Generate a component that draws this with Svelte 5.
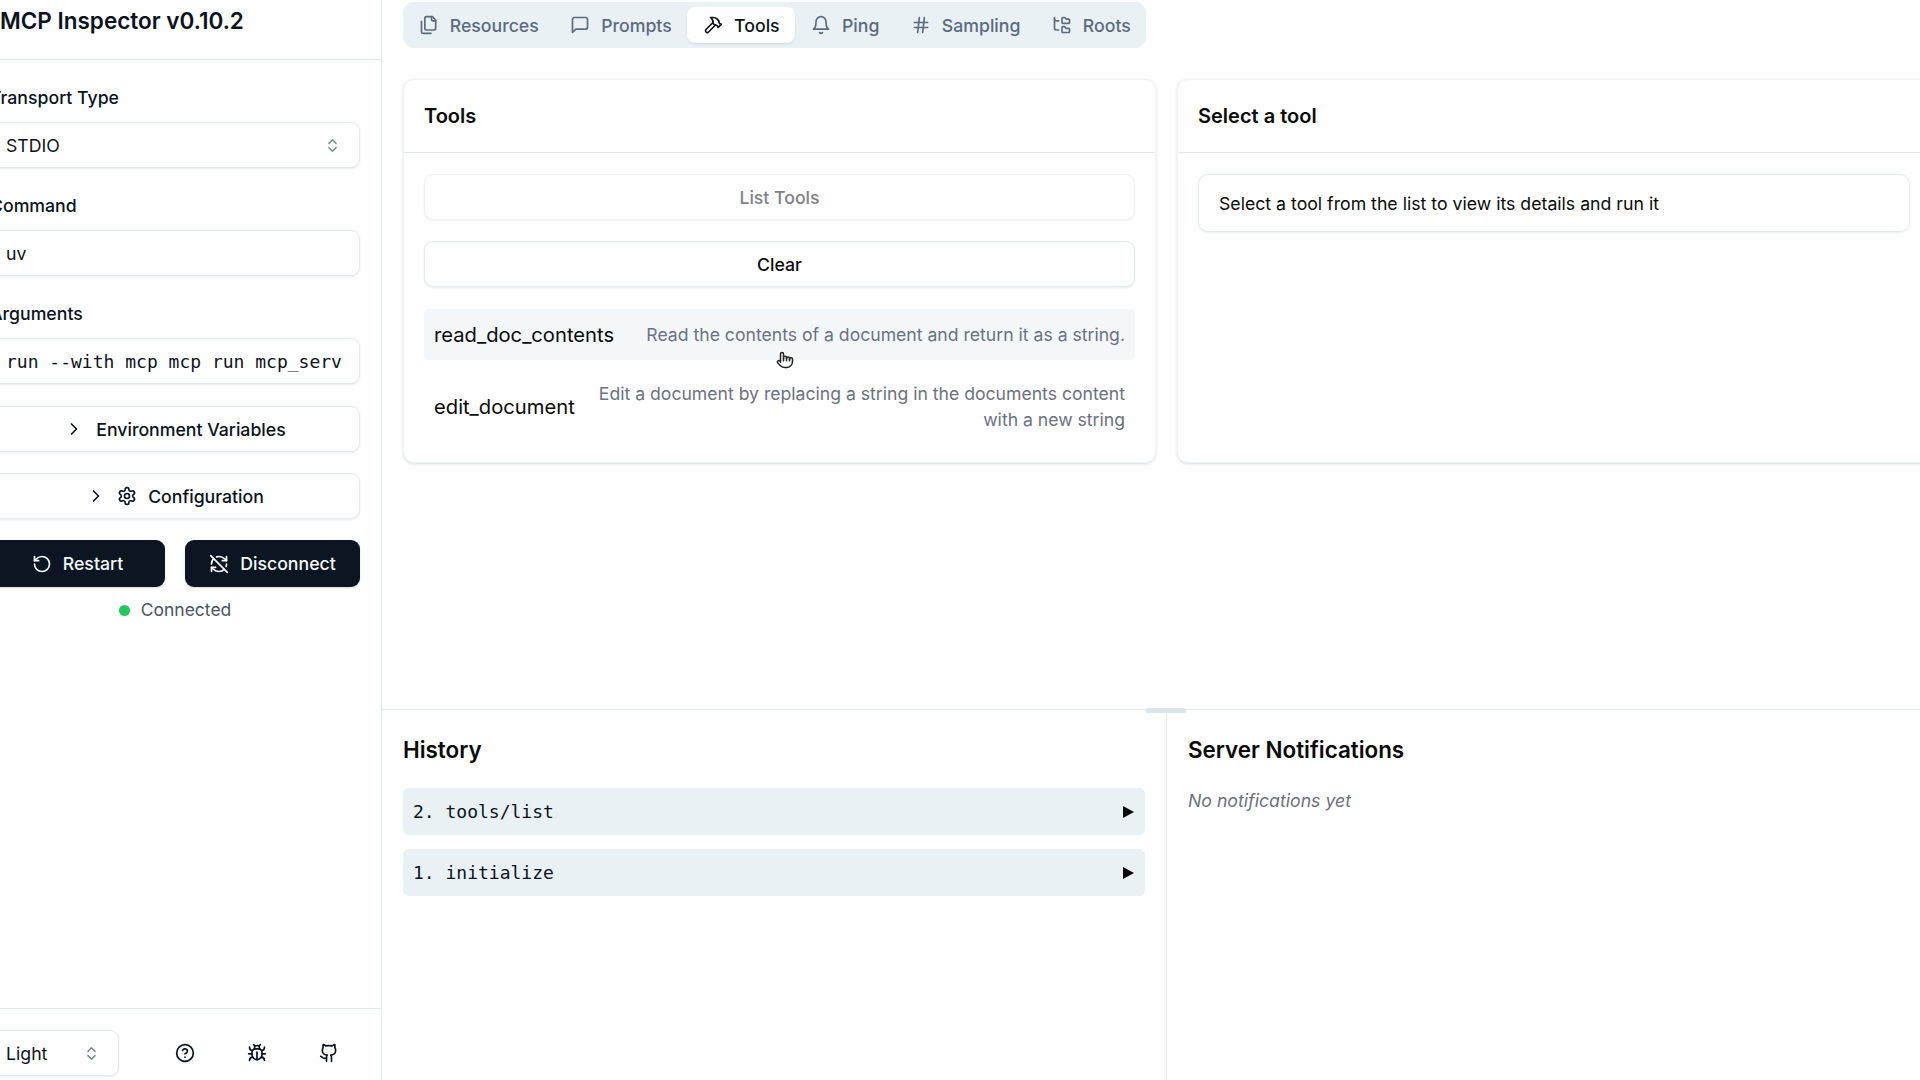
<script lang="ts">
    const icons: Record<string, string[]> = {
        files: [
            "M20 7h-3a2 2 0 0 1-2-2V2",
            "M9 18a2 2 0 0 1-2-2V4a2 2 0 0 1 2-2h7l4 4v10a2 2 0 0 1-2 2Z",
            "M3 7.6v12.8A1.6 1.6 0 0 0 4.6 22h9.8",
        ],
        message: ["M21 15a2 2 0 0 1-2 2H7l-4 4V5a2 2 0 0 1 2-2h14a2 2 0 0 1 2 2z"],
        hammer: [
            "m15 12-8.373 8.373a1 1 0 1 1-3-3L12 9",
            "m18 15 4-4",
            "m21.5 11.5-1.914-1.914A2 2 0 0 1 19 8.172V7l-2.26-2.26a6 6 0 0 0-4.202-1.756L9 2.96l.92.82A6.18 6.18 0 0 1 12 8.4V10l2 2h1.172a2 2 0 0 1 1.414.586L18.5 14.5",
        ],
        bell: [
            "M6 8a6 6 0 0 1 12 0c0 7 3 9 3 9H3s3-2 3-9",
            "M10.3 21a1.94 1.94 0 0 0 3.4 0",
        ],
        hash: ["M4 9h16", "M4 15h16", "M10 3 8 21", "M16 3l-2 18"],
        roots: [
            "M20 10a1 1 0 0 0 1-1V6a1 1 0 0 0-1-1h-2.5a1 1 0 0 1-.8-.4l-.9-1.2A1 1 0 0 0 15 3h-2a1 1 0 0 0-1 1v5a1 1 0 0 0 1 1Z",
            "M20 21a1 1 0 0 0 1-1v-3a1 1 0 0 0-1-1h-2.9a1 1 0 0 1-.88-.55l-.42-.85a1 1 0 0 0-.92-.6H13a1 1 0 0 0-1 1v5a1 1 0 0 0 1 1Z",
            "M3 5a2 2 0 0 0 2 2h3",
            "M3 3v13a2 2 0 0 0 2 2h3",
        ],
        updown: ["m7 15 5 5 5-5", "m7 9 5-5 5 5"],
        right: ["m9 18 6-6-6-6"],
        gear: [
            "M12.22 2h-.44a2 2 0 0 0-2 2v.18a2 2 0 0 1-1 1.73l-.43.25a2 2 0 0 1-2 0l-.15-.08a2 2 0 0 0-2.73.73l-.22.38a2 2 0 0 0 .73 2.73l.15.1a2 2 0 0 1 1 1.72v.51a2 2 0 0 1-1 1.74l-.15.09a2 2 0 0 0-.73 2.73l.22.38a2 2 0 0 0 2.73.73l.15-.08a2 2 0 0 1 2 0l.43.25a2 2 0 0 1 1 1.73V20a2 2 0 0 0 2 2h.44a2 2 0 0 0 2-2v-.18a2 2 0 0 1 1-1.73l.43-.25a2 2 0 0 1 2 0l.15.08a2 2 0 0 0 2.73-.73l.22-.39a2 2 0 0 0-.73-2.73l-.15-.08a2 2 0 0 1-1-1.74v-.5a2 2 0 0 1 1-1.74l.15-.09a2 2 0 0 0 .73-2.73l-.22-.38a2 2 0 0 0-2.73-.73l-.15.08a2 2 0 0 1-2 0l-.43-.25a2 2 0 0 1-1-1.73V4a2 2 0 0 0-2-2z",
            "M12 9a3 3 0 1 0 0 6 3 3 0 0 0 0-6z",
        ],
        restart: ["M3 12a9 9 0 1 0 9-9 9.75 9.75 0 0 0-6.74 2.74L3 8", "M3 3v5h5"],
        disconnect: [
            "M21 8L18.74 5.74A9.75 9.75 0 0 0 12 3C11 3 10.03 3.16 9.13 3.47",
            "M8 16H3v5",
            "M3 12C3 9.51 4 7.26 5.64 5.64",
            "m3 16 2.26 2.26A9.75 9.75 0 0 0 12 21c2.49 0 4.74-1 6.36-2.64",
            "M21 12c0 1-.16 1.97-.47 2.87",
            "M21 3v5h-5",
            "M22 22 2 2",
        ],
        help: [
            "M12 2a10 10 0 1 0 0 20 10 10 0 0 0 0-20z",
            "M9.09 9a3 3 0 0 1 5.83 1c0 2-3 3-3 3",
            "M12 17h.01",
        ],
        bug: [
            "m8 2 1.88 1.88",
            "M14.12 3.88 16 2",
            "M9 7.13v-1a3.003 3.003 0 1 1 6 0v1",
            "M12 20c-3.3 0-6-2.7-6-6v-3a4 4 0 0 1 4-4h4a4 4 0 0 1 4 4v3c0 3.3-2.7 6-6 6",
            "M12 20v-9",
            "M6.53 9C4.6 8.8 3 7.1 3 5",
            "M6 13H2",
            "M3 21c0-2.1 1.7-3.9 3.8-4",
            "M20.97 5c0 2.1-1.6 3.8-3.5 4",
            "M22 13h-4",
            "M17.2 17c2.1.1 3.8 1.9 3.8 4",
        ],
        github: [
            "M15 22v-4a4.8 4.8 0 0 0-1-3.5c3 0 6-2 6-5.5.08-1.25-.27-2.48-1-3.5.28-1.15.28-2.35 0-3.5 0 0-1 0-3 1.5-2.64-.5-5.36-.5-8 0C6 2 5 2 5 2c-.3 1.15-.3 2.35 0 3.5A5.403 5.403 0 0 0 4 9c0 3.5 3 5.5 6 5.5-.39.49-.68 1.05-.85 1.65-.17.6-.22 1.23-.15 1.85v4",
            "M9 18c-4.51 2-5-2-7-2",
        ],
        pointer: [
            "M18 11a2 2 0 1 1 4 0v3a8 8 0 0 1-8 8h-2c-2.8 0-4.5-.86-5.99-2.34l-3.6-3.6a2 2 0 0 1 2.83-2.82L6 15V4a2 2 0 0 1 4 0v5a2 2 0 0 1 4 0v1a2 2 0 0 1 4 0z",
            "M10 9.5V13",
            "M14 10v3",
            "M18 11v2",
        ],
    };

    const tabs = [
        { label: "Resources", icon: "files" },
        { label: "Prompts", icon: "message" },
        { label: "Tools", icon: "hammer", active: true },
        { label: "Ping", icon: "bell" },
        { label: "Sampling", icon: "hash" },
        { label: "Roots", icon: "roots" },
    ];

    const history = ["2. tools/list", "1. initialize"];
</script>

{#snippet icon(name: string, size = 20)}
    <svg
        class="icon"
        width={size}
        height={size}
        viewBox="0 0 24 24"
        fill="none"
        stroke="currentColor"
        stroke-width="2"
        stroke-linecap="round"
        stroke-linejoin="round"
    >
        {#each icons[name] as d}
            <path {d} />
        {/each}
    </svg>
{/snippet}

<div class="page">
    <aside class="sidebar">
        <div class="brand">MCP Inspector v0.10.2</div>

        <div class="side-body">
            <div class="field">
                <div class="label">Transport Type</div>
                <div class="control select">
                    <span>STDIO</span>
                    <span class="updown">{@render icon("updown", 17)}</span>
                </div>
            </div>
            <div class="field">
                <div class="label">Command</div>
                <div class="control">uv</div>
            </div>
            <div class="field">
                <div class="label">Arguments</div>
                <div class="control mono">run --with mcp mcp run mcp_serv</div>
            </div>

            <button class="outline env" type="button">
                {@render icon("right", 20)}
                <span>Environment Variables</span>
            </button>
            <button class="outline config" type="button">
                {@render icon("right", 20)}
                {@render icon("gear", 20)}
                <span>Configuration</span>
            </button>

            <div class="actions">
                <button class="dark" type="button">
                    {@render icon("restart", 20)}
                    <span>Restart</span>
                </button>
                <button class="dark" type="button">
                    {@render icon("disconnect", 20)}
                    <span>Disconnect</span>
                </button>
            </div>

            <div class="status">
                <span class="dot"></span>
                <span>Connected</span>
            </div>
        </div>

        <div class="side-foot">
            <div class="control select theme">
                <span>Light</span>
                <span class="updown">{@render icon("updown", 17)}</span>
            </div>
            <div class="foot-icons">
                <button class="ghost" type="button">{@render icon("help", 20)}</button>
                <button class="ghost" type="button">{@render icon("bug", 20)}</button>
                <button class="ghost" type="button">{@render icon("github", 20)}</button>
            </div>
        </div>
    </aside>

    <main class="main">
        <section class="top">
            <nav class="tabs">
                {#each tabs as tab}
                    <div class="tab" class:active={tab.active}>
                        {@render icon(tab.icon, 20)}
                        <span>{tab.label}</span>
                    </div>
                {/each}
            </nav>

            <div class="cards">
                <div class="card">
                    <h3 class="card-head">Tools</h3>
                    <div class="card-body">
                        <button class="outline wide disabled" type="button">List Tools</button>
                        <button class="outline wide" type="button">Clear</button>
                        <div class="tool-list">
                            <div class="tool hover">
                                <span class="tool-name">read_doc_contents</span>
                                <span class="tool-desc">Read the contents of a document and return it as a string.</span>
                                <span class="cursor">{@render icon("pointer", 18)}</span>
                            </div>
                            <div class="tool">
                                <span class="tool-name">edit_document</span>
                                <span class="tool-desc">Edit a document by replacing a string in the documents content with a new string</span>
                            </div>
                        </div>
                    </div>
                </div>

                <div class="card">
                    <h3 class="card-head">Select a tool</h3>
                    <div class="card-body">
                        <div class="alert">Select a tool from the list to view its details and run it</div>
                    </div>
                </div>
            </div>
        </section>

        <section class="bottom">
            <div class="handle"></div>
            <div class="pane history">
                <h2>History</h2>
                <ul>
                    {#each history as item}
                        <li>
                            <span>{item}</span>
                            <span class="arrow"></span>
                        </li>
                    {/each}
                </ul>
            </div>
            <div class="pane">
                <h2>Server Notifications</h2>
                <p class="empty">No notifications yet</p>
            </div>
        </section>
    </main>
</div>

<style>
    :global(body) {
        background: #fefefe;
    }

    .page {
        display: flex;
        width: 1920px;
        height: 1080px;
        overflow: hidden;
        font-family: Inter, "Liberation Sans", sans-serif;
        font-size: 17.7px;
        color: #0b1320;
        background: #fefefe;
    }

    .icon {
        display: block;
        flex: none;
    }

    button {
        font: inherit;
        color: inherit;
        cursor: pointer;
    }

    .sidebar {
        flex: none;
        display: flex;
        flex-direction: column;
        width: 413px;
        margin-left: -31px;
        border-right: 1px solid #e0eaf0;
        box-sizing: border-box;
    }

    .brand {
        height: 59px;
        padding: 0 21px 0 31px;
        line-height: 42px;
        font-size: 22.5px;
        font-weight: 600;
        border-bottom: 1px solid #e0eaf0;
    }

    .side-body {
        flex: 1;
        padding: 27px 21px 0;
    }

    .field {
        display: flex;
        flex-direction: column;
        gap: 13px;
        margin-bottom: 27px;
    }

    .field:nth-child(3) {
        margin-bottom: 22px;
    }

    .label {
        line-height: 22px;
        font-weight: 500;
    }

    .control {
        display: flex;
        align-items: center;
        justify-content: space-between;
        height: 46px;
        padding: 0 15px;
        box-sizing: border-box;
        border: 1px solid #e2ebf0;
        border-radius: 9px;
        background: #fefefe;
        box-shadow: 0 1px 2px rgba(70, 100, 120, 0.12);
        white-space: nowrap;
        overflow: hidden;
    }

    .select {
        padding-right: 18px;
    }

    .updown {
        color: #7b8794;
    }

    .mono {
        font-family: "DejaVu Sans Mono", "Liberation Mono", monospace;
        font-size: 18px;
        justify-content: flex-start;
    }

    .outline {
        display: flex;
        align-items: center;
        justify-content: center;
        width: 100%;
        height: 46px;
        padding: 0;
        box-sizing: border-box;
        border: 1px solid #e2ebf0;
        border-radius: 9px;
        background: #fefefe;
        box-shadow: 0 1px 2px rgba(70, 100, 120, 0.12);
        font-weight: 500;
    }

    .env {
        gap: 12px;
        margin-bottom: 21px;
    }

    .config {
        gap: 11px;
        margin-bottom: 21px;
    }

    .actions {
        display: grid;
        grid-template-columns: 1fr 1fr;
        gap: 20px;
    }

    .dark {
        display: flex;
        align-items: center;
        justify-content: center;
        gap: 11px;
        height: 47px;
        padding: 0;
        border: none;
        border-radius: 9px;
        background: #0c1622;
        color: #f6f9fb;
        font-weight: 500;
        box-shadow: 0 1px 2px rgba(0, 0, 0, 0.15);
    }

    .status {
        display: flex;
        align-items: center;
        justify-content: center;
        gap: 11px;
        margin-top: 11px;
        line-height: 24px;
        font-size: 17.5px;
        color: #4a5563;
    }

    .dot {
        width: 11px;
        height: 11px;
        border-radius: 50%;
        background: #22c55e;
    }

    .side-foot {
        display: flex;
        align-items: flex-start;
        height: 72px;
        padding: 21px 21px 0;
        box-sizing: border-box;
        border-top: 1px solid #e0eaf0;
    }

    .theme {
        width: 129px;
    }

    .foot-icons {
        display: flex;
        gap: 26px;
        margin-left: 43px;
    }

    .ghost {
        display: flex;
        align-items: center;
        justify-content: center;
        width: 46px;
        height: 46px;
        padding: 0;
        border: none;
        background: none;
    }

    .main {
        flex: none;
        display: flex;
        flex-direction: column;
        width: 1570px;
        height: 1080px;
    }

    .top {
        height: 707px;
        padding: 2px 21px 0;
        border-bottom: 1px solid #e0eaf0;
    }

    .tabs {
        display: inline-flex;
        align-items: center;
        height: 46px;
        border-radius: 11px;
        background: #e9f1f4;
    }

    .tab {
        display: flex;
        align-items: center;
        gap: 11px;
        height: 36px;
        padding: 0 15.7px;
        border-radius: 8px;
        color: #5b6b7f;
        font-weight: 500;
    }

    .tab.active {
        background: #fefefe;
        color: #0b1320;
        box-shadow: 0 1px 2px rgba(70, 100, 120, 0.18);
    }

    .cards {
        display: grid;
        grid-template-columns: 753px 754px;
        gap: 21px;
        margin-top: 31px;
    }

    .card {
        height: 384px;
        box-sizing: border-box;
        border: 1px solid #f0f3f5;
        border-radius: 11px;
        background: #fefefe;
        box-shadow: 0 1px 3px rgba(40, 60, 80, 0.16);
    }

    .card-head {
        margin: 0;
        height: 72px;
        padding: 0 20px;
        line-height: 73px;
        font-size: 20px;
        font-weight: 600;
        color: #0a0a0a;
        border-bottom: 1px solid #e5e8ea;
    }

    .card-body {
        display: flex;
        flex-direction: column;
        padding: 21px 20px;
    }

    .wide {
        margin-bottom: 22px;
        color: #0a0a0a;
    }

    .disabled {
        color: #7d8288;
        box-shadow: 0 1px 2px rgba(70, 100, 120, 0.07);
        border-color: #eef2f5;
        margin-bottom: 21px;
    }

    .tool-list {
        display: flex;
        flex-direction: column;
        gap: 8px;
    }

    .tool {
        position: relative;
        display: flex;
        align-items: center;
        justify-content: space-between;
        gap: 24px;
        padding: 12.5px 10px;
        border-radius: 5px;
    }

    .tool.hover {
        background: #f3f7fa;
    }

    .tool-name {
        flex: none;
        font-size: 20.2px;
        line-height: 26px;
        color: #0a0a0a;
    }

    .tool-desc {
        font-size: 17.63px;
        line-height: 26px;
        text-align: right;
        color: #6b7280;
    }

    .cursor {
        position: absolute;
        left: 352px;
        top: 42px;
        color: #222;
    }

    .cursor :global(path:first-child) {
        fill: #fff;
    }

    .alert {
        height: 58px;
        padding: 0 20px;
        line-height: 57px;
        box-sizing: border-box;
        border: 1px solid #e2ebf0;
        border-radius: 10px;
        color: #0a0a0a;
        box-shadow: 0 1px 2px rgba(70, 100, 120, 0.1);
    }

    .bottom {
        position: relative;
        flex: 1;
        display: flex;
        min-height: 0;
    }

    .handle {
        position: absolute;
        left: 764px;
        top: -2px;
        width: 40px;
        height: 5px;
        border-radius: 3px;
        background: #dbe5ea;
    }

    .pane {
        flex: 1;
        padding: 26px 21px 0;
    }

    .history {
        flex: none;
        width: 742px;
        border-right: 1px solid #e0eaf0;
    }

    h2 {
        margin: 0;
        line-height: 28px;
        font-size: 22.4px;
        font-weight: 600;
        color: #0a0a0a;
    }

    ul {
        display: flex;
        flex-direction: column;
        gap: 14px;
        margin: 24px 0 0;
        padding: 0;
        list-style: none;
    }

    li {
        display: flex;
        align-items: center;
        justify-content: space-between;
        height: 47px;
        padding: 0 11px 0 10px;
        box-sizing: border-box;
        border-radius: 6px;
        background: #e9f1f4;
        font-family: "DejaVu Sans Mono", "Liberation Mono", monospace;
        font-size: 18px;
    }

    .arrow {
        width: 0;
        height: 0;
        border-left: 11px solid #0a0a0a;
        border-top: 6px solid transparent;
        border-bottom: 6px solid transparent;
    }

    .empty {
        margin: 25px 0 0;
        font-style: italic;
        color: #6b7280;
        line-height: 24px;
    }
</style>
